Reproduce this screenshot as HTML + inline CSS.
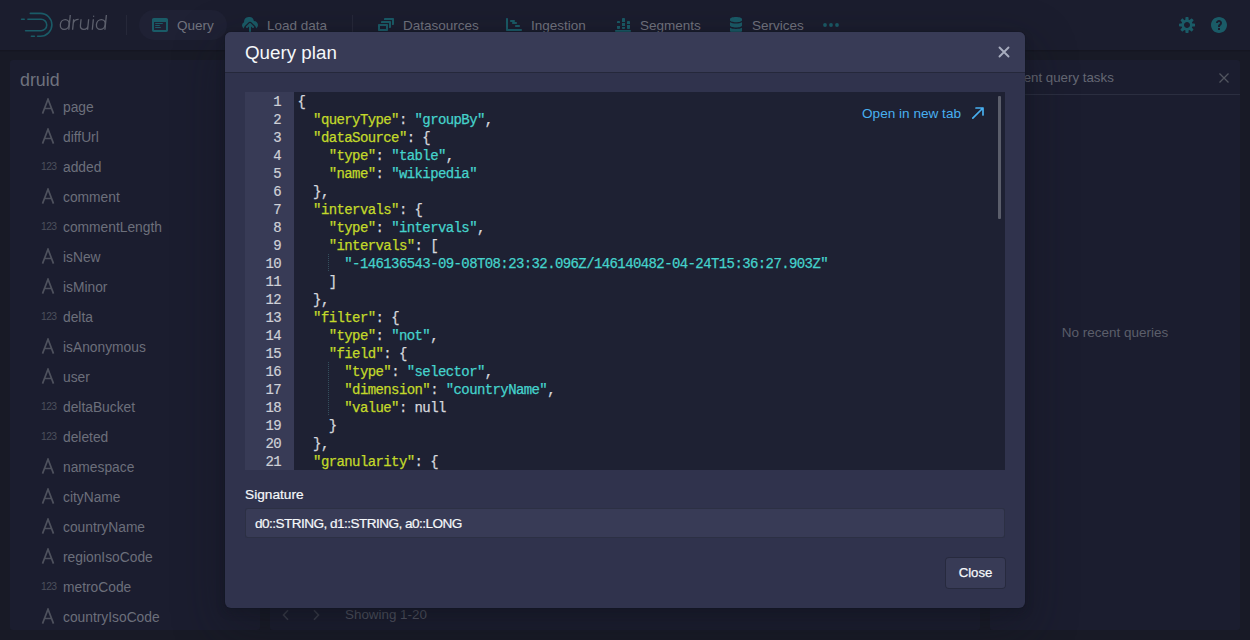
<!DOCTYPE html>
<html><head><meta charset="utf-8">
<style>
*{box-sizing:border-box;margin:0;padding:0}
html,body{width:1250px;height:640px;overflow:hidden}
body{background:#181a26;font-family:"Liberation Sans",sans-serif;position:relative;color:#f5f8fa}
.abs{position:absolute}
#hdr{left:0;top:0;width:1250px;height:50px;background:#1b1d2e;box-shadow:0 1px 1px rgba(10,12,20,.25)}
.navtxt{position:absolute;top:18px;font-size:13.5px;color:#72747f;white-space:nowrap;line-height:16px}
.ico{position:absolute;fill:#1a5b67}
.panel{position:absolute;background:#1b1d2f;border-radius:3px}
.col{position:absolute;left:63px;font-size:13.8px;color:#6c6f7b;white-space:nowrap;line-height:16px;margin-top:2px}
.tA{position:absolute;left:41px;font-size:17px;color:#50535f;line-height:16px}
.t123{position:absolute;left:41px;font-size:10.3px;color:#4c4f5b;line-height:16px;letter-spacing:-0.6px;margin-top:1px}
#modal{left:225px;top:32px;width:800px;height:576px;background:#30334d;border-radius:6px;box-shadow:0 0 0 1px rgba(16,20,30,.15),0 4px 8px rgba(16,20,30,.3),0 18px 46px 6px rgba(16,20,30,.35);overflow:hidden}
#mhead{left:0;top:0;width:800px;height:40px;background:#383b56;box-shadow:0 1px 0 #25283b}
#code{left:20px;top:60px;width:760px;height:378px;background:#1e2133;overflow:hidden}
#gutter{left:0;top:0;width:49px;height:378px;background:#383b56}
.ln{position:absolute;right:13px;font-family:"Liberation Mono",monospace;font-size:14px;letter-spacing:-0.6px;line-height:18px;color:#cfd1d8;-webkit-text-stroke:0.2px #cfd1d8}
#lines{left:52.5px;top:1px;font-family:"Liberation Mono",monospace;font-size:14px;letter-spacing:-0.6px;line-height:18px;color:#d6d8de;white-space:pre;-webkit-text-stroke:0.25px currentColor}
.k{color:#c3d92a}
.s{color:#45d3cc}
</style></head><body>

<div id="hdr" class="abs">
  <!-- logo -->
  <svg class="abs" style="left:18px;top:10px" width="38" height="30" viewBox="0 0 38 30" fill="none" stroke="#1a5b67" stroke-width="1.6" stroke-linecap="round">
    <path d="M12.3 3.4 H22.5 A11.4 11.4 0 0 1 22.5 26.2 H19.6"/>
    <path d="M9.9 9.2 H23 A5.75 5.75 0 0 1 23 20.7 H7.6"/>
    <path d="M3.6 9.2 H6.2"/>
    <path d="M13.4 26.2 H16.4"/>
  </svg>
  <svg class="abs" style="left:55px;top:10px" width="60" height="25" viewBox="0 0 60 25" fill="none" stroke="#5d606d" stroke-width="1.3" stroke-linecap="butt">
    <g transform="matrix(1 0 -0.1 1 1.98 0)">
      <ellipse cx="9.2" cy="14.5" rx="4.4" ry="4.9"/>
      <path d="M13.8 5 V19.8"/>
      <path d="M17.6 19.8 V9.3 M17.6 13 Q18.5 9.3 22.6 9.4"/>
      <path d="M25 9.2 V15.5 Q25 19.3 28.9 19.3 Q32.6 19.3 32.6 15.5 V9.2 M32.6 15 V19.8"/>
      <path d="M37.3 9.2 V19.8"/>
      <circle cx="37.3" cy="6.3" r="0.7" fill="#5d606d" stroke="none"/>
      <ellipse cx="45.3" cy="14.5" rx="4.4" ry="4.9"/>
      <path d="M49.9 5 V19.8"/>
    </g>
  </svg>
  <div class="abs" style="left:126px;top:15px;width:1px;height:20px;background:#262839"></div>
  <div class="abs" style="left:139px;top:10px;width:88px;height:30px;border-radius:15px;background:#1f2134"></div>
  <svg class="ico" style="left:152px;top:17px" width="16" height="16" viewBox="0 0 16 16"><path d="M14.3 1H1.7C.76 1 0 1.76 0 2.7v10.6c0 .94.76 1.7 1.7 1.7h12.6c.94 0 1.7-.76 1.7-1.7V2.7C16 1.76 15.24 1 14.3 1zm-.3 12H2V5h12v8zM3.5 7h7c.28 0 .5-.22.5-.5S10.78 6 10.5 6h-7c-.28 0-.5.22-.5.5s.22.5.5.5zm0 2h4c.28 0 .5-.22.5-.5S7.78 8 7.5 8h-4c-.28 0-.5.22-.5.5s.22.5.5.5zm0 2h5c.28 0 .5-.22.5-.5s-.22-.5-.5-.5h-5c-.28 0-.5.22-.5.5s.22.5.5.5z"/></svg>
  <div class="navtxt" style="left:177px">Query</div>
  <svg class="ico" style="left:242px;top:17px" width="16" height="16" viewBox="0 0 16 16"><path d="M8.71 6.29C8.53 6.11 8.28 6 8 6s-.53.11-.71.29l-3 3a1.003 1.003 0 001.42 1.42L7 9.41V15c0 .55.45 1 1 1s1-.45 1-1V9.41l1.29 1.29c.18.19.43.3.71.3a1.003 1.003 0 00.71-1.71l-3-3zM12 4c-.03 0-.07 0-.1.01A5 5 0 002 5c0 .11.01.22.02.33a3.495 3.495 0 00.07 6.37c-.05-.23-.09-.46-.09-.7 0-.83.34-1.58.88-2.12l3-3a2.993 2.993 0 014.24 0l3 3c.54.54.88 1.29.88 2.12 0 .16-.02.32-.05.47C15.16 10.78 16 9.49 16 8c0-2.21-1.79-4-4-4z"/></svg>
  <div class="navtxt" style="left:267px">Load data</div>
  <div class="abs" style="left:352px;top:15px;width:1px;height:20px;background:#262839"></div>
  <svg class="ico" style="left:378px;top:17px" width="16" height="16" viewBox="0 0 16 16"><path d="M12 3.98H4c-.55 0-1 .45-1 1v1h8v5h1c.55 0 1-.45 1-1v-5c0-.55-.45-1-1-1zm3-3H7c-.55 0-1 .45-1 1v1h8v5h1c.55 0 1-.45 1-1v-5c0-.55-.45-1-1-1zm-6 6H1c-.55 0-1 .45-1 1v5c0 .55.45 1 1 1h8c.55 0 1-.45 1-1v-5c0-.55-.45-1-1-1zm-1 5H2v-3h6v3z"/></svg>
  <div class="navtxt" style="left:403px">Datasources</div>
  <svg class="ico" style="left:506px;top:17px" width="16" height="16" viewBox="0 0 16 16"><path d="M10 10h3c.55 0 1-.45 1-1s-.45-1-1-1h-3c-.55 0-1 .45-1 1s.45 1 1 1zm-5-5h3c.55 0 1-.45 1-1s-.45-1-1-1H5c-.55 0-1 .45-1 1s.45 1 1 1zm2 2h3c.55 0 1-.45 1-1s-.45-1-1-1H7c-.55 0-1 .45-1 1s.45 1 1 1zm8 5H2V2c0-.55-.45-1-1-1s-1 .45-1 1v11c0 .55.45 1 1 1h14c.55 0 1-.45 1-1s-.45-1-1-1z"/></svg>
  <div class="navtxt" style="left:531px">Ingestion</div>
  <svg class="ico" style="left:615px;top:17px" width="16" height="16" viewBox="0 0 16 16"><path d="M10 2c0-.55-.45-1-1-1H8c-.55 0-1 .45-1 1v3h3V2zm3 10h1c.55 0 1-.45 1-1V8h-3v3c0 .55.45 1 1 1zm2-7c0-.55-.45-1-1-1h-1c-.55 0-1 .45-1 1v2h3V5zm-5 1H7v3h3V6zM3 12h1c.55 0 1-.45 1-1V9H2v2c0 .55.45 1 1 1zm12 1H1c-.55 0-1 .45-1 1s.45 1 1 1h14c.55 0 1-.45 1-1s-.45-1-1-1zM5 5c0-.55-.45-1-1-1H3c-.55 0-1 .45-1 1v1h3V5zm3 7h1c.55 0 1-.45 1-1v-1H7v1c0 .55.45 1 1 1z"/></svg>
  <div class="navtxt" style="left:640px">Segments</div>
  <svg class="ico" style="left:728px;top:17px" width="16" height="16" viewBox="0 0 16 16"><path d="M8 0C4.7 0 2 .9 2 2v1.3C2 4.4 4.7 5.3 8 5.3s6-.9 6-2V2c0-1.1-2.7-2-6-2zM2 5.3v3.2C2 9.6 4.7 10.5 8 10.5s6-.9 6-2V5.3c-1.4.8-3.6 1.2-6 1.2s-4.6-.4-6-1.2zm0 5.4V14c0 1.1 2.7 2 6 2s6-.9 6-2v-3.3c-1.4.8-3.6 1.2-6 1.2s-4.6-.4-6-1.2z"/></svg>
  <div class="navtxt" style="left:752px">Services</div>
  <svg class="ico" style="left:823px;top:17px" width="16" height="16" viewBox="0 0 16 16"><circle cx="2" cy="8" r="1.9"/><circle cx="8" cy="8" r="1.9"/><circle cx="14" cy="8" r="1.9"/></svg>
  <svg class="ico" style="left:1179px;top:17px" width="16" height="16" viewBox="0 0 16 16"><path d="M15.19 6.39h-1.85c-.11-.37-.27-.71-.45-1.04l1.36-1.35c.31-.31.31-.82 0-1.13l-1.13-1.13a.803.803 0 00-1.13 0l-1.36 1.36c-.33-.18-.67-.33-1.04-.44V.81c0-.44-.36-.8-.8-.8h-1.6c-.44 0-.8.36-.8.8v1.86c-.39.11-.75.27-1.1.47l-1.3-1.3c-.3-.3-.79-.3-1.09 0L1.82 2.93c-.3.3-.3.79 0 1.09l1.3 1.3c-.2.34-.36.7-.48 1.09H.8c-.44 0-.8.36-.8.8v1.6c0 .44.36.8.8.8h1.85c.11.37.27.71.45 1.04l-1.36 1.36c-.31.31-.31.82 0 1.13l1.13 1.13c.31.31.82.31 1.13 0l1.36-1.36c.33.18.67.33 1.04.44v1.86c0 .44.36.8.8.8h1.6c.44 0 .8-.36.8-.8v-1.86c.39-.11.75-.27 1.1-.47l1.3 1.3c.3.3.79.3 1.09 0l1.09-1.09c.3-.3.3-.79 0-1.09l-1.3-1.3c.2-.34.36-.7.48-1.09h1.85c.44 0 .8-.36.8-.8v-1.6a.816.816 0 00-.81-.79zM8 11c-1.66 0-3-1.34-3-3s1.34-3 3-3 3 1.34 3 3-1.34 3-3 3z"/></svg>
  <svg class="ico" style="left:1211px;top:17px" width="16" height="16" viewBox="0 0 16 16"><path d="M8 0C3.58 0 0 3.58 0 8s3.58 8 8 8 8-3.58 8-8-3.58-8-8-8zM7 13H9V11H7zm1-10C6.34 3 5 4.34 5 6h2c0-.55.45-1 1-1s1 .45 1 1c0 1-2 1.5-2 3v1h2V9.5c0-1 2-1.5 2-3.5 0-1.66-1.34-3-3-3z" fill-rule="evenodd"/></svg>
</div>

<!-- panels -->
<div class="panel" style="left:10px;top:60px;width:250px;height:570px">
<div class="abs" style="left:10px;top:10px;font-size:17.8px;line-height:20px;color:#6f727e">druid</div>
<svg class="abs" style="left:31px;top:38px" width="14" height="16" viewBox="0 0 14 16" fill="none" stroke="#4e515d" stroke-width="1.7"><path d="M1.5 15.6 L7 1.2 L12.5 15.6 M3.5 10.5 H10.5"/></svg><div class="col" style="top:38px;left:53px">page</div>
<svg class="abs" style="left:31px;top:68px" width="14" height="16" viewBox="0 0 14 16" fill="none" stroke="#4e515d" stroke-width="1.7"><path d="M1.5 15.6 L7 1.2 L12.5 15.6 M3.5 10.5 H10.5"/></svg><div class="col" style="top:68px;left:53px">diffUrl</div>
<div class="t123" style="left:31px;top:98px">123</div><div class="col" style="top:98px;left:53px">added</div>
<svg class="abs" style="left:31px;top:128px" width="14" height="16" viewBox="0 0 14 16" fill="none" stroke="#4e515d" stroke-width="1.7"><path d="M1.5 15.6 L7 1.2 L12.5 15.6 M3.5 10.5 H10.5"/></svg><div class="col" style="top:128px;left:53px">comment</div>
<div class="t123" style="left:31px;top:158px">123</div><div class="col" style="top:158px;left:53px">commentLength</div>
<svg class="abs" style="left:31px;top:188px" width="14" height="16" viewBox="0 0 14 16" fill="none" stroke="#4e515d" stroke-width="1.7"><path d="M1.5 15.6 L7 1.2 L12.5 15.6 M3.5 10.5 H10.5"/></svg><div class="col" style="top:188px;left:53px">isNew</div>
<svg class="abs" style="left:31px;top:218px" width="14" height="16" viewBox="0 0 14 16" fill="none" stroke="#4e515d" stroke-width="1.7"><path d="M1.5 15.6 L7 1.2 L12.5 15.6 M3.5 10.5 H10.5"/></svg><div class="col" style="top:218px;left:53px">isMinor</div>
<div class="t123" style="left:31px;top:248px">123</div><div class="col" style="top:248px;left:53px">delta</div>
<svg class="abs" style="left:31px;top:278px" width="14" height="16" viewBox="0 0 14 16" fill="none" stroke="#4e515d" stroke-width="1.7"><path d="M1.5 15.6 L7 1.2 L12.5 15.6 M3.5 10.5 H10.5"/></svg><div class="col" style="top:278px;left:53px">isAnonymous</div>
<svg class="abs" style="left:31px;top:308px" width="14" height="16" viewBox="0 0 14 16" fill="none" stroke="#4e515d" stroke-width="1.7"><path d="M1.5 15.6 L7 1.2 L12.5 15.6 M3.5 10.5 H10.5"/></svg><div class="col" style="top:308px;left:53px">user</div>
<div class="t123" style="left:31px;top:338px">123</div><div class="col" style="top:338px;left:53px">deltaBucket</div>
<div class="t123" style="left:31px;top:368px">123</div><div class="col" style="top:368px;left:53px">deleted</div>
<svg class="abs" style="left:31px;top:398px" width="14" height="16" viewBox="0 0 14 16" fill="none" stroke="#4e515d" stroke-width="1.7"><path d="M1.5 15.6 L7 1.2 L12.5 15.6 M3.5 10.5 H10.5"/></svg><div class="col" style="top:398px;left:53px">namespace</div>
<svg class="abs" style="left:31px;top:428px" width="14" height="16" viewBox="0 0 14 16" fill="none" stroke="#4e515d" stroke-width="1.7"><path d="M1.5 15.6 L7 1.2 L12.5 15.6 M3.5 10.5 H10.5"/></svg><div class="col" style="top:428px;left:53px">cityName</div>
<svg class="abs" style="left:31px;top:458px" width="14" height="16" viewBox="0 0 14 16" fill="none" stroke="#4e515d" stroke-width="1.7"><path d="M1.5 15.6 L7 1.2 L12.5 15.6 M3.5 10.5 H10.5"/></svg><div class="col" style="top:458px;left:53px">countryName</div>
<svg class="abs" style="left:31px;top:488px" width="14" height="16" viewBox="0 0 14 16" fill="none" stroke="#4e515d" stroke-width="1.7"><path d="M1.5 15.6 L7 1.2 L12.5 15.6 M3.5 10.5 H10.5"/></svg><div class="col" style="top:488px;left:53px">regionIsoCode</div>
<div class="t123" style="left:31px;top:518px">123</div><div class="col" style="top:518px;left:53px">metroCode</div>
<svg class="abs" style="left:31px;top:548px" width="14" height="16" viewBox="0 0 14 16" fill="none" stroke="#4e515d" stroke-width="1.7"><path d="M1.5 15.6 L7 1.2 L12.5 15.6 M3.5 10.5 H10.5"/></svg><div class="col" style="top:548px;left:53px">countryIsoCode</div>
</div>
<div class="panel" style="left:270px;top:60px;width:710px;height:570px">
<svg class="abs" style="left:10px;top:549px" width="12" height="12" viewBox="0 0 12 12" fill="none" stroke="#3e414e" stroke-width="1.6"><path d="M8 1.2 L3.5 6 L8 10.8"/></svg>
<svg class="abs" style="left:40px;top:549px" width="12" height="12" viewBox="0 0 12 12" fill="none" stroke="#3e414e" stroke-width="1.6"><path d="M4 1.2 L8.5 6 L4 10.8"/></svg>
<div class="abs" style="left:75px;top:547px;font-size:13.4px;line-height:16px;color:#575a67;white-space:nowrap">Showing 1-20</div>
</div>
<div class="panel" style="left:990px;top:60px;width:250px;height:570px">
<div class="abs" style="left:10px;top:10px;font-size:13.3px;line-height:16px;color:#656874;white-space:nowrap">Recent query tasks</div>
<svg class="abs" style="left:227.5px;top:11.5px" width="12" height="12" viewBox="0 0 12 12" fill="none" stroke="#52555f" stroke-width="1.3"><path d="M1.5 1.5 L10.5 10.5 M10.5 1.5 L1.5 10.5"/></svg>
<div class="abs" style="left:0;top:34px;width:250px;height:1px;background:#2b2e40"></div>
<div class="abs" style="left:0;top:265px;width:250px;text-align:center;font-size:13.5px;line-height:16px;color:#5c5f6b;white-space:nowrap">No recent queries</div>
</div>

<div id="modal" class="abs">
  <div id="mhead" class="abs">
    <div class="abs" style="left:20px;top:10px;font-size:18.8px;line-height:22px;color:#f5f8fa;white-space:nowrap">Query plan</div>
    <svg class="abs" style="left:773px;top:14px" width="12" height="12" viewBox="0 0 12 12" fill="none" stroke="#a8adbf" stroke-width="1.9" stroke-linecap="round"><path d="M1.5 1.5 L10.5 10.5 M10.5 1.5 L1.5 10.5"/></svg>
  </div>
  <div id="code" class="abs">
    <div id="gutter" class="abs"><div class="ln" style="top:1px">1</div><div class="ln" style="top:19px">2</div><div class="ln" style="top:37px">3</div><div class="ln" style="top:55px">4</div><div class="ln" style="top:73px">5</div><div class="ln" style="top:91px">6</div><div class="ln" style="top:109px">7</div><div class="ln" style="top:127px">8</div><div class="ln" style="top:145px">9</div><div class="ln" style="top:163px">10</div><div class="ln" style="top:181px">11</div><div class="ln" style="top:199px">12</div><div class="ln" style="top:217px">13</div><div class="ln" style="top:235px">14</div><div class="ln" style="top:253px">15</div><div class="ln" style="top:271px">16</div><div class="ln" style="top:289px">17</div><div class="ln" style="top:307px">18</div><div class="ln" style="top:325px">19</div><div class="ln" style="top:343px">20</div><div class="ln" style="top:361px">21</div></div>
    <div class="abs" style="left:83px;top:162px;width:1px;height:18px;background:repeating-linear-gradient(#34505e 0 1px,transparent 1px 2px)"></div><div class="abs" style="left:83px;top:270px;width:1px;height:54px;background:repeating-linear-gradient(#34505e 0 1px,transparent 1px 2px)"></div><div id="lines" class="abs">{
  <span class="k">&quot;queryType&quot;</span>: <span class="s">&quot;groupBy&quot;</span>,
  <span class="k">&quot;dataSource&quot;</span>: {
    <span class="k">&quot;type&quot;</span>: <span class="s">&quot;table&quot;</span>,
    <span class="k">&quot;name&quot;</span>: <span class="s">&quot;wikipedia&quot;</span>
  },
  <span class="k">&quot;intervals&quot;</span>: {
    <span class="k">&quot;type&quot;</span>: <span class="s">&quot;intervals&quot;</span>,
    <span class="k">&quot;intervals&quot;</span>: [
      <span class="s">&quot;-146136543-09-08T08:23:32.096Z/146140482-04-24T15:36:27.903Z&quot;</span>
    ]
  },
  <span class="k">&quot;filter&quot;</span>: {
    <span class="k">&quot;type&quot;</span>: <span class="s">&quot;not&quot;</span>,
    <span class="k">&quot;field&quot;</span>: {
      <span class="k">&quot;type&quot;</span>: <span class="s">&quot;selector&quot;</span>,
      <span class="k">&quot;dimension&quot;</span>: <span class="s">&quot;countryName&quot;</span>,
      <span class="k">&quot;value&quot;</span>: null
    }
  },
  <span class="k">&quot;granularity&quot;</span>: {</div>
    <div class="abs" style="left:617px;top:14px;font-size:13.6px;line-height:16px;color:#48aff0;white-space:nowrap">Open in new tab</div>
    <svg class="abs" style="left:726px;top:14px" width="14" height="14" viewBox="0 0 14 14" fill="none" stroke="#48aff0" stroke-width="1.7" stroke-linecap="round" stroke-linejoin="round"><path d="M1.8 12.2 L12 2 M5 2 H12 V9"/></svg>
    <div class="abs" style="left:753px;top:4px;width:3px;height:123px;background:#5b5e6b;border-radius:1px"></div>
  </div>
  <div class="abs" style="left:20px;top:454.5px;font-size:13.7px;line-height:16px;color:#f5f8fa;white-space:nowrap;-webkit-text-stroke:0.2px #f5f8fa">Signature</div>
  <div class="abs" style="left:20px;top:476px;width:760px;height:30px;background:#383b56;border-radius:3px;box-shadow:inset 0 0 0 1px rgba(16,22,26,.3)">
    <div class="abs" style="left:10px;top:7.5px;font-size:13.6px;line-height:16px;color:#f5f8fa;white-space:nowrap;letter-spacing:-0.55px;-webkit-text-stroke:0.2px #f5f8fa">d0::STRING, d1::STRING, a0::LONG</div>
  </div>
  <div class="abs" style="left:720px;top:525px;width:61px;height:32px;background:#383b56;border-radius:4px;box-shadow:inset 0 0 0 1px #272a3e">
    <div class="abs" style="left:0;top:8px;width:61px;text-align:center;font-size:13.2px;line-height:16px;color:#f5f8fa;-webkit-text-stroke:0.25px #f5f8fa">Close</div>
  </div>
</div>

</body></html>
